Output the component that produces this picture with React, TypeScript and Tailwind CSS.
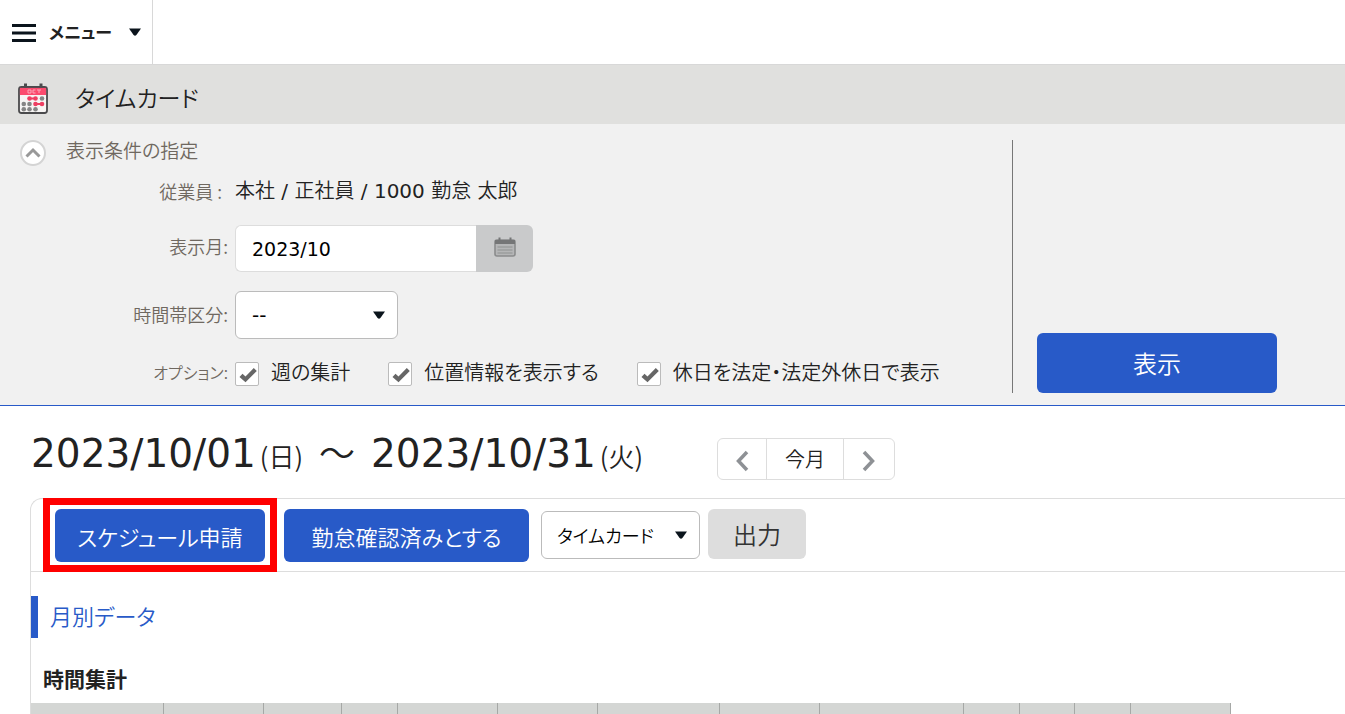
import React, { useState } from 'react'

const columns = [
  'w-[133px]',
  'w-[100px]',
  'w-[78px]',
  'w-[56px]',
  'w-[100px]',
  'w-[100px]',
  'w-[122px]',
  'w-[100px]',
  'w-[144px]',
  'w-[56px]',
  'w-[55px]',
  'w-[56px]',
  'w-[100px]'
]

const Caret: React.FC = () => (
  <svg className="w-3 h-2" viewBox="0 0 12 8" aria-hidden="true">
    <path d="M0 0.500h12L7.400 7Q6 8.400 4.600 7z" fill="#0b141c" />
  </svg>
)

const Chevron: React.FC<{ d: string }> = ({ d }) => (
  <svg className="w-[14px] h-[22px]" viewBox="0 0 14 22" fill="none" stroke="#8e9195" strokeWidth="3.500" aria-hidden="true">
    <path d={d} />
  </svg>
)

const Latin: React.FC<{ children: React.ReactNode }> = ({ children }) => (
  <span className="font-normal font-['DejaVu_Sans',sans-serif]">{children}</span>
)

const TimecardIcon: React.FC = () => (
  <svg className="w-8 h-8" viewBox="0 0 32 32" aria-hidden="true">
    <rect x="2" y="4" width="28" height="26" rx="2.500" fill="#f7f5f4" stroke="#4a4a4c" strokeWidth="1.800" />
    <path d="M2.900 4.900h26.200v7.100H2.900z" fill="#fb4b6e" />
    <path d="M8.500 0.500v4M24 0.500v4" stroke="#4a4a4c" strokeWidth="3" />
    <path d="M11 7h3v3h-3zM18.500 7h-2.500v3h2.500M20 7h4M22 7v3" fill="none" stroke="#fda8b8" />
    <g fill="#ee3f62">
      <circle cx="12.500" cy="15.500" r="2.300" />
      <circle cx="18.500" cy="15.500" r="2.300" />
      <circle cx="18.500" cy="21" r="2.300" />
      <circle cx="25" cy="21" r="2.300" />
      <path d="M12.500 14.500h6v2h-6zM18.500 20h6.500v2h-6.500z" />
    </g>
    <g fill="#858585">
      <circle cx="25" cy="15.500" r="2.300" />
      <circle cx="6.800" cy="21" r="2.300" />
      <circle cx="12.500" cy="21" r="2.300" />
      <circle cx="6.800" cy="26.200" r="2.300" />
      <circle cx="12.500" cy="26.200" r="2.300" />
      <circle cx="18.500" cy="26.200" r="2.300" />
    </g>
  </svg>
)

const CalendarIcon: React.FC = () => (
  <svg className="w-[22px] h-5" viewBox="0 0 22 20" aria-hidden="true">
    <rect x="1" y="3" width="20" height="16" rx="2" fill="#b5b6b7" stroke="#8b8c8d" strokeWidth="1.600" />
    <path d="M1 3h20v4H1z" fill="#757677" />
    <path d="M5.500 0.500v3M16.500 0.500v3" stroke="#757677" strokeWidth="2" />
    <path d="M3.500 10h15M3.500 13h15M3.500 16h15" stroke="#909192" strokeWidth="1.200" />
  </svg>
)

interface OptionProps {
  id: string
  label: string
  checked: boolean
  onChange: () => void
}

const Option: React.FC<OptionProps> = ({ id, label, checked, onChange }) => (
  <div className="flex items-center gap-3">
    <span className="grid mt-1">
      <input
        id={id}
        type="checkbox"
        checked={checked}
        onChange={onChange}
        className="col-start-1 row-start-1 appearance-none w-6 h-6 bg-white border border-[#bbb] rounded-xs"
      />
      {checked && (
        <svg className="col-start-1 row-start-1 w-6 h-6 pointer-events-none" viewBox="0 0 24 24" aria-hidden="true">
          <path d="M4.500 15l3-3.200 3 2.700 8.300-8.500 3 3L10.500 20.300z" fill="#666" />
        </svg>
      )}
    </span>
    <label htmlFor={id}>{label}</label>
  </div>
)

const App: React.FC = () => {
  const [open, setOpen] = useState(true)
  const [month, setMonth] = useState('2023/10')
  const [options, setOptions] = useState([
    { id: 'weekly', label: '週の集計', checked: true },
    { id: 'location', label: '位置情報を表示する', checked: true },
    { id: 'holiday', label: '休日を法定・法定外休日で表示', checked: true }
  ])

  const toggle = (id: string): void => {
    setOptions(prev => prev.map(o => (o.id === id ? { ...o, checked: !o.checked } : o)))
  }

  return (
    <div className="min-h-screen bg-white text-[#222] text-[20px] leading-6 font-[350] overflow-x-hidden font-['Noto_Sans_CJK_JP',sans-serif] [font-feature-settings:'palt']">
      <header className="flex h-[65px] border-b border-[#d8d8d8]">
        <button className="flex items-center pl-3 pr-[11px] border-r border-[#d8d8d8] text-[17px] font-bold">
          <svg className="w-6 h-5 mr-[13px] mt-[2px]" viewBox="0 0 24 20" stroke="#0b141c" strokeWidth="3" aria-hidden="true">
            <path d="M0 2.500h24M0 10h24M0 17.500h24" />
          </svg>
          <span className="w-20 pb-px text-left">メニュー</span>
          <Caret />
        </button>
      </header>

      <div className="flex items-center gap-[26px] h-[59px] pl-[17px] pt-2 bg-[#e0e0de]">
        <TimecardIcon />
        <h1 className="text-[23px] leading-7 pb-1">タイムカード</h1>
      </div>

      <section className="flex bg-[#f1f1f1] border-b border-[#285ac8] pt-4 pb-3">
        <div className="flex-1">
          <div className="flex items-center gap-5 h-[22px] pl-5 text-[#6f6860]">
            <button
              aria-label="表示条件の指定"
              aria-expanded={open}
              onClick={() => { setOpen(!open) }}
              className="flex items-center justify-center w-[26px] h-[26px] mt-1 rounded-full bg-white border-2 border-[#d4d4d4]"
            >
              <svg className="w-4 h-3" viewBox="0 0 16 12" fill="none" stroke="#999" strokeWidth="3" aria-hidden="true">
                <path d="M1.500 9.500L8 3l6.500 6.500" />
              </svg>
            </button>
            <h2 className="text-[19px] pb-[2px]">表示条件の指定</h2>
          </div>

          {open && (
            <div className="grid grid-cols-[228px_1fr] gap-x-[7px] items-center">
              <span className="text-right text-[18px] text-[#6f6860] pr-[6px]">従業員 :</span>
              <p className="h-[58px] pt-4">
                本社<Latin> / </Latin>正社員<Latin> / 1000 </Latin>勤怠<Latin> </Latin>太郎
              </p>

              <label htmlFor="month" className="text-right text-[18px] text-[#6f6860]">表示月:</label>
              <div className="flex h-[52px] pt-[5px]">
                <input
                  id="month"
                  value={month}
                  onChange={e => { setMonth(e.target.value) }}
                  className="w-[241px] px-4 text-[19px] font-normal font-['DejaVu_Sans',sans-serif] text-black bg-white border border-r-0 border-[#ddd] rounded-l-md"
                />
                <button aria-label="カレンダー" className="flex items-center justify-center w-[57px] pb-1 bg-[#c9cacb] rounded-r-md">
                  <CalendarIcon />
                </button>
              </div>

              <label htmlFor="zone" className="text-right text-[18px] text-[#6f6860] pt-4">時間帯区分:</label>
              <div className="grid items-center w-[163px] mt-[19px]">
                <select id="zone" className="col-start-1 row-start-1 appearance-none h-12 px-4 font-normal font-['DejaVu_Sans',sans-serif] text-black bg-white border border-[#bbb] rounded-md">
                  <option>--</option>
                </select>
                <span className="col-start-1 row-start-1 flex justify-self-end mr-[13px] pointer-events-none"><Caret /></span>
              </div>

              <span className="text-right text-[16px] text-[#6f6860] pt-3">オプション:</span>
              <div className="flex gap-[38px] h-[54px] pt-3 items-center">
                {options.map(o => (
                  <Option key={o.id} id={o.id} label={o.label} checked={o.checked} onChange={() => { toggle(o.id) }} />
                ))}
              </div>
            </div>
          )}
        </div>
        <div className="flex items-end w-[333px] pl-6 border-l border-[#777]">
          <button className="w-60 h-[60px] rounded-md bg-[#285ac8] text-white text-[24px]">表示</button>
        </div>
      </section>

      <main className="pl-[30px]">
        <div className="flex items-end h-[74px]">
          <h2 className="flex items-baseline w-[687px] pl-px pb-[3px] text-[39px] leading-[42px] whitespace-pre">
            <Latin>2023/10/01</Latin>
            <span className="pl-1 text-[26px]">(日)</span>
            <span className="text-[36px] px-4">～</span>
            <Latin>2023/10/31</Latin>
            <span className="pl-1 text-[26px]">(火)</span>
          </h2>
          <div className="flex h-[42px] border border-[#ddd] rounded-md divide-x divide-[#ddd]">
            <button aria-label="前月" className="flex items-center justify-center w-[49px] pt-1"><Chevron d="M12 2L3.500 11l8.500 9" /></button>
            <button className="w-[77px]">今月</button>
            <button aria-label="翌月" className="flex items-center justify-center w-[50px] pt-1"><Chevron d="M2 2l8.500 9L2 20" /></button>
          </div>
        </div>

        <div className="mt-[18px] border-l border-t border-[#ddd] rounded-tl-xl">
          <div className="flex items-start h-[73px] pt-[10px] pl-6 border-b border-[#ddd] text-[24px]">
            <div className="relative">
              <button className="w-[210px] h-[53px] rounded-md bg-[#285ac8] text-white text-[22px]">スケジュール申請</button>
              <div className="absolute -inset-x-3 -top-[11px] bottom-[-10px] border-7 border-[#f00] pointer-events-none" />
            </div>
            <button className="w-[245px] h-[53px] ml-[19px] rounded-md bg-[#285ac8] text-white text-[22px]">勤怠確認済みとする</button>
            <div className="grid items-center w-[159px] mt-[2px] ml-3">
              <select aria-label="出力形式" className="col-start-1 row-start-1 appearance-none h-12 px-[15px] text-[18px] text-black bg-white border border-[#bbb] rounded-md">
                <option>タイムカード</option>
              </select>
              <span className="col-start-1 row-start-1 flex justify-self-end mr-[13px] pointer-events-none"><Caret /></span>
            </div>
            <button className="w-[98px] h-[50px] ml-2 rounded-md bg-[#ddd] text-[#333]">出力</button>
          </div>

          <h2 className="flex items-center h-[42px] mt-6 pl-3 pb-1 border-l-7 border-[#285ac8] text-[22px] text-[#285ac8]">月別データ</h2>
          <h3 className="mt-7 pl-3 h-[37px] text-[21px] font-bold">時間集計</h3>
          <table className="table-fixed w-[1200px] border-separate border-spacing-0 bg-[#d4d6d4]">
            <thead>
              <tr>
                {columns.map((width, i) => (
                  <th key={i} className={`${width} h-[11px] p-0 border-r border-[#a6a8a6]`} />
                ))}
              </tr>
            </thead>
          </table>
        </div>
      </main>
    </div>
  )
}

export default App
